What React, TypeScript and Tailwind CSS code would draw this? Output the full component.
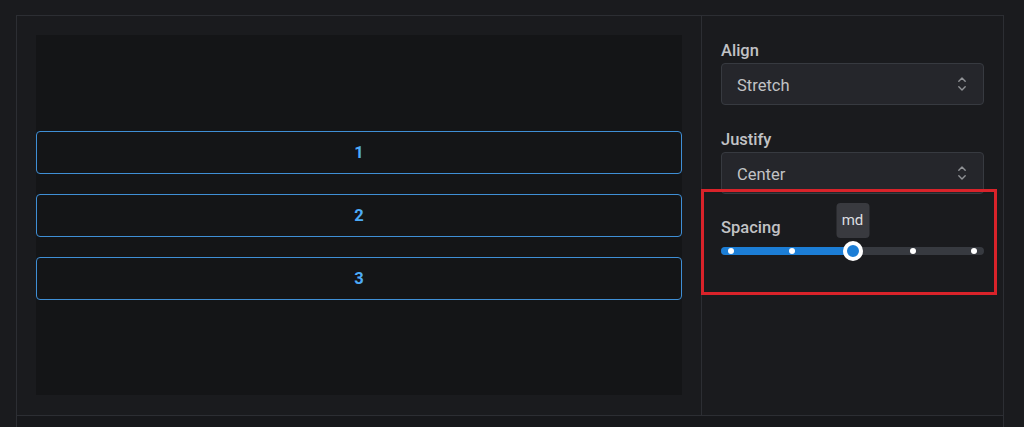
import React from "react";

function SelectorIcon() {
  return (
    <svg width="10" height="18" viewBox="0 0 10 18" fill="none" className="text-[#909296]">
      <path d="M1.8 6.2L5 3L8.2 6.2" stroke="currentColor" strokeWidth="1.4" strokeLinecap="round" strokeLinejoin="round" />
      <path d="M1.8 11.8L5 15L8.2 11.8" stroke="currentColor" strokeWidth="1.4" strokeLinecap="round" strokeLinejoin="round" />
    </svg>
  );
}

function FakeSelect({ value }: { value: string }) {
  return (
    <div className="flex h-[42px] items-center justify-between rounded-[4px] border border-[#373a40] bg-[#25262b] pl-[15px] pr-[16px]">
      <span className="pt-[4px] text-[16.5px] text-[#c1c2c5]">{value}</span>
      <SelectorIcon />
    </div>
  );
}

export default function App() {
  const marks = [0, 25, 50, 75, 100];
  const value = 50;

  return (
    <div className="relative min-h-screen bg-[#1a1b1e] pt-[15px] font-['Roboto',sans-serif]">
      <div className="ml-4 w-[988px] border border-b-0 border-[#2c2e33]">
        <div className="grid grid-cols-[684px_1fr]">
          {/* Preview */}
          <div className="p-[19px] pb-[20px]">
            <div className="flex h-[360px] flex-col justify-center gap-[20px] bg-[#141517]">
              {["1", "2", "3"].map((n) => (
                <div
                  key={n}
                  className="flex h-[43px] items-center justify-center rounded-[4px] border border-[#3f8fd6] pt-[3px] text-[16.5px] font-bold text-[#4dabf7]"
                >
                  {n}
                </div>
              ))}
            </div>
          </div>

          {/* Controls */}
          <div className="border-l border-[#2c2e33] px-[19px] pt-[23px]">
            <div className="text-[16.5px] font-medium leading-[24px] text-[#c1c2c5]">Align</div>
            <FakeSelect value="Stretch" />

            <div className="mt-[23px] text-[16.5px] font-medium leading-[24px] text-[#c1c2c5]">Justify</div>
            <FakeSelect value="Center" />

            <div className="mt-[22px] text-[16.5px] font-medium leading-[24px] text-[#c1c2c5]">Spacing</div>
            <div className="relative mt-[7px] h-2 rounded-full bg-[#373a40]">
              <div className="absolute inset-y-0 left-0 w-[131px] rounded-l-full bg-[#1c7ed6]" />
              <div className="absolute inset-y-0 left-[10px] right-[10px]">
                {marks.map((m) => (
                  <div
                    key={m}
                    className="absolute top-1/2 h-[6px] w-[6px] -translate-x-1/2 -translate-y-1/2 rounded-full bg-white"
                    style={{ left: `${m}%` }}
                  />
                ))}
                <div
                  className="absolute top-1/2 h-5 w-5 -translate-x-1/2 -translate-y-1/2 rounded-full border-[4px] border-white bg-[#1c7ed6]"
                  style={{ left: `${value}%` }}
                />
                <div
                  className="absolute bottom-[17px] flex h-[35px] w-[33px] -translate-x-1/2 items-center justify-center rounded-[4px] bg-[#393a3f] text-[15px] text-[#dcdde0]"
                  style={{ left: `${value}%` }}
                >
                  md
                </div>
              </div>
            </div>
          </div>
        </div>
        <div className="h-[12px] border-t border-[#2c2e33] bg-[#17181b]" />
      </div>

      {/* highlight annotation */}
      <div className="pointer-events-none absolute left-[701px] top-[189px] h-[106px] w-[296px] border-[3px] border-[#d9232a]" />
    </div>
  );
}
